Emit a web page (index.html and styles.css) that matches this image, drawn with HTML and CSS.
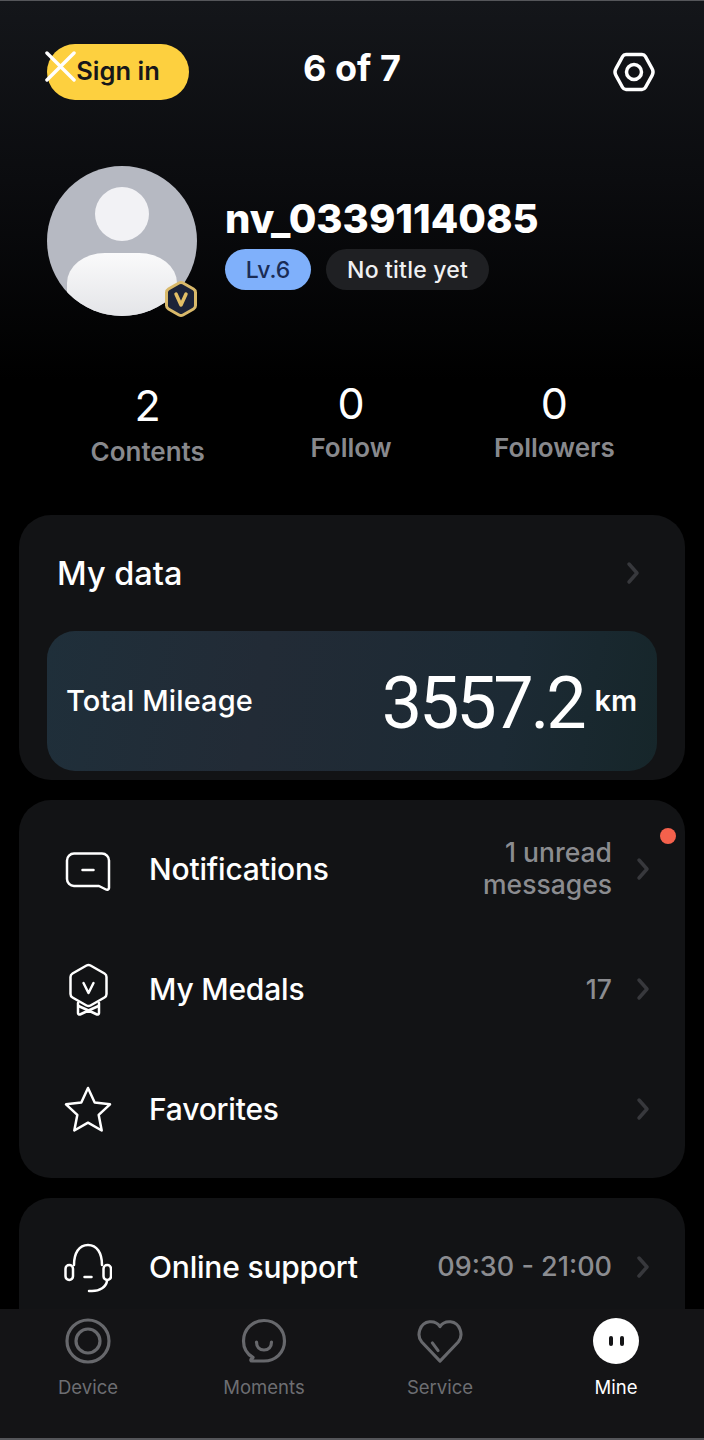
FILE: index.html
```html
<!DOCTYPE html>
<html>
  <head>
    <meta name="viewport" content="width=device-width, initial-scale=1" />
    <title>Mine</title>
    <link rel="stylesheet" href="styles.css">
  </head>
  <body>
    <div class="screen">
      <main class="content">
        <header class="topbar">
          <button class="signin" type="button">Sign in</button>
          <svg class="close-icon" viewBox="0 0 32 32"><path d="M2 2 30 30M30 2 2 30"/></svg>
          <h1 class="page-count">6 of 7</h1>
          <svg class="settings-icon" viewBox="0 0 42 42"><path d="M13 3.500h16a4 4 0 0 1 3.400 2L39 17.500a7 7 0 0 1 0 7l-6.600 12a4 4 0 0 1-3.400 2H13a4 4 0 0 1-3.400-2L3 24.500a7 7 0 0 1 0-7l6.600-12a4 4 0 0 1 3.400-2z"/><circle cx="21" cy="21" r="7.500"/></svg>
        </header>

        <section class="profile">
          <div class="avatar">
            <div class="avatar-clip">
              <div class="avatar-head"></div>
              <div class="avatar-body"></div>
            </div>
            <svg class="avatar-badge" viewBox="0 0 34 38"><path class="badge-hex" d="M15 3a4 4 0 0 1 4 0l10.500 6a4 4 0 0 1 2 3.500v13a4 4 0 0 1-2 3.500L19 35a4 4 0 0 1-4 0L4.500 29a4 4 0 0 1-2-3.500v-13a4 4 0 0 1 2-3.500z"/><path class="badge-v" d="M12 14l5 11 5-11"/></svg>
          </div>
          <div class="profile-info">
            <div class="username">nv_0339114085</div>
            <div class="chips">
              <span class="chip chip-level">Lv.6</span>
              <span class="chip chip-title">No title yet</span>
            </div>
          </div>
        </section>

        <section class="stats">
          <div class="stat stat-first"><b>2</b><span>Contents</span></div>
          <div class="stat"><b>0</b><span>Follow</span></div>
          <div class="stat"><b>0</b><span>Followers</span></div>
        </section>

        <section class="card card-data">
          <div class="data-head">
            <span>My data</span>
            <svg class="chevron" viewBox="0 0 14 24"><path d="M3 3l8 9-8 9"/></svg>
          </div>
          <div class="mileage">
            <span class="mileage-label">Total Mileage</span>
            <span class="mileage-value">3557.2</span>
            <span class="mileage-unit">km</span>
          </div>
        </section>

        <section class="card card-list">
          <span class="unread-dot"></span>
          <div class="row">
            <svg class="row-icon" viewBox="0 0 48 56"><path d="M10 12.500h28a7 7 0 0 1 7 7V47a2 2 0 0 1-3 1.500L35 45H10a7 7 0 0 1-7-7V19.500a7 7 0 0 1 7-7z"/><path d="M18.500 29h11"/></svg>
            <span class="row-label">Notifications</span>
            <span class="row-value row-value-wrap">1 unread<br>messages</span>
            <svg class="chevron" viewBox="0 0 14 24"><path d="M3 3l8 9-8 9"/></svg>
          </div>
          <div class="row">
            <svg class="row-icon" viewBox="0 0 48 56"><path d="M22.500 4.500a4 4 0 0 1 4 0l14 8a4 4 0 0 1 2 3.500v17a4 4 0 0 1-2 3.500l-14 8a4 4 0 0 1-4 0l-14-8a4 4 0 0 1-2-3.500v-17a4 4 0 0 1 2-3.500z"/><path d="M19.500 22l5 10 5-10"/><path d="M14 42v10a1.500 1.500 0 0 0 2 1.500l8.500-4 8.500 4a1.500 1.500 0 0 0 2-1.500V42"/><path d="M14.500 45l10 4.500 10-4.500"/></svg>
            <span class="row-label">My Medals</span>
            <span class="row-value">17</span>
            <svg class="chevron" viewBox="0 0 14 24"><path d="M3 3l8 9-8 9"/></svg>
          </div>
          <div class="row">
            <svg class="row-icon" viewBox="0 -5 48 56"><path d="M24 2l6.700 14.500 15.300 1.800-11.300 10.600 3 15.600L24 36.700 10.300 44.500l3-15.600L2 18.300l15.300-1.800z"/></svg>
            <span class="row-label">Favorites</span>
            <svg class="chevron" viewBox="0 0 14 24"><path d="M3 3l8 9-8 9"/></svg>
          </div>
        </section>

        <section class="card card-support">
          <div class="row">
            <svg class="row-icon" viewBox="0 -2 48 56"><path d="M10 24C10 12 15 4 24 4s14 8 14 20"/><rect x="1.500" y="24" width="7.500" height="15" rx="3.700"/><rect x="39.500" y="24" width="7.500" height="15" rx="3.700"/><path d="M20.500 36h7"/><path d="M43 40c-1 6-7 10-15 10h-3"/></svg>
            <span class="row-label">Online support</span>
            <span class="row-value row-value-wide">09:30 - 21:00</span>
            <svg class="chevron" viewBox="0 0 14 24"><path d="M3 3l8 9-8 9"/></svg>
          </div>
        </section>
      </main>

      <nav class="tabbar">
        <div class="tab">
          <svg class="tab-icon" viewBox="0 0 46 46"><circle cx="23" cy="23" r="21"/><circle cx="23" cy="23" r="12"/></svg>
          <span>Device</span>
        </div>
        <div class="tab">
          <svg class="tab-icon" viewBox="0 0 46 46"><path d="M12 39.500C6 36 2.500 30 2.500 23 2.500 11.500 11.500 2.500 23 2.500S43.500 11.500 43.500 23 34.500 43 23 43H11c-1.500 0-1.500-1.500-.5-2z"/><path d="M15.500 24c0 5 3 8 7.500 8s7.500-3 7.500-8"/></svg>
          <span>Moments</span>
        </div>
        <div class="tab">
          <svg class="tab-icon" viewBox="0 0 48 46"><path d="M24 44 5 24C-1 17 3 4 13 3c5-.5 9 2 11 5 2-3 6-5.500 11-5 10 1 14 14 8 21z"/><path d="M16 25l6 8"/></svg>
          <span>Service</span>
        </div>
        <div class="tab tab-active">
          <div class="mine-icon"><i></i><i></i></div>
          <span>Mine</span>
        </div>
      </nav>
    </div>
  </body>
</html>
```

FILE: styles.css
```css
* {
  box-sizing: border-box;
}

html,
body {
  margin: 0;
  background: #000;
}

body {
  font-family: Inter, "Liberation Sans", sans-serif;
  color: #fff;
}

svg {
  fill: none;
  stroke-linecap: round;
  stroke-linejoin: round;
}

.screen {
  width: 704px;
  height: 1440px;
  display: flex;
  flex-direction: column;
  overflow: hidden;
  background: linear-gradient(#14161a 0, #0b0c0f 180px, #000 380px);
  border-top: 1px solid #55565a;
  border-bottom: 2px solid #55565a;
}

.content {
  flex: 1;
  min-height: 0;
  overflow: hidden;
}

/* top bar */
.topbar {
  position: relative;
  height: 56px;
  margin-top: 43px;
  padding: 0 49px 0 47px;
  display: flex;
  align-items: center;
  justify-content: space-between;
}

.signin {
  width: 142px;
  height: 56px;
  padding: 0 0 3px;
  border: none;
  border-radius: 28px;
  background: #fdd03f;
  color: #17171a;
  font-family: inherit;
  font-size: 25.500px;
  font-weight: 600;
}

.close-icon {
  position: absolute;
  left: 45px;
  top: 7px;
  width: 31px;
  height: 31px;
  stroke: #fff;
  stroke-width: 3.500;
}

.page-count {
  position: absolute;
  left: 0;
  right: 0;
  top: 4px;
  margin: 0;
  text-align: center;
  font-size: 36px;
  line-height: 40px;
  font-weight: 700;
}

.settings-icon {
  width: 42px;
  height: 42px;
  stroke: #fff;
  stroke-width: 3.500;
}

/* profile */
.profile {
  margin-top: 66px;
  padding-left: 47px;
  display: flex;
  align-items: center;
  gap: 29px;
}

.avatar {
  position: relative;
  flex: none;
  width: 150px;
  height: 150px;
}

.avatar-clip {
  position: relative;
  width: 150px;
  height: 150px;
  border-radius: 50%;
  overflow: hidden;
  background: #b6b9c2;
}

.avatar-head {
  position: absolute;
  left: 48px;
  top: 21px;
  width: 54px;
  height: 54px;
  border-radius: 50%;
  background: #f2f2f5;
}

.avatar-body {
  position: absolute;
  left: 20px;
  top: 87px;
  width: 110px;
  height: 63px;
  border-radius: 38px 38px 0 0 / 30px 30px 0 0;
  background: linear-gradient(#fafafb, #e4e5e8);
}

.avatar-badge {
  position: absolute;
  right: -1px;
  bottom: -2px;
  width: 34px;
  height: 38px;
}

.badge-hex {
  fill: #1c2338;
  stroke: #d9b96a;
  stroke-width: 3;
}

.badge-v {
  stroke: #e3bf66;
  stroke-width: 3.500;
}

.profile-info {
  margin-top: 5px;
}

.username {
  font-size: 40px;
  line-height: 44px;
  font-weight: 800;
  margin-left: -1px;
}

.chips {
  margin-top: 8px;
  margin-left: -1px;
  display: flex;
  gap: 15px;
}

.chip {
  height: 41px;
  border-radius: 21px;
  display: flex;
  align-items: center;
  justify-content: center;
  font-size: 23px;
  font-weight: 500;
}

.chip-level {
  width: 86px;
  background: #7fb0fb;
  color: #1a2c55;
}

.chip-title {
  width: 163px;
  background: #1f2023;
  color: #f0f0f2;
  letter-spacing: 0.200px;
}

/* stats */
.stats {
  margin-top: 61px;
  height: 138px;
  padding: 0 48px 0 46px;
  display: grid;
  grid-template-columns: repeat(3, 1fr);
}

.stat {
  display: flex;
  flex-direction: column;
  align-items: center;
  gap: 3px;
}

.stat b {
  font-size: 43px;
  line-height: 52px;
  font-weight: 400;
}

.stat span {
  font-size: 26px;
  line-height: 32px;
  font-weight: 600;
  color: #88898d;
}

.stat-first {
  padding-top: 2px;
  gap: 5px;
}

/* cards */
.card {
  position: relative;
  margin: 0 19px 20px;
  border-radius: 32px;
  background: #121315;
}

.card-data {
  height: 265px;
  padding: 0 28px;
  margin-bottom: 20px;
}

.data-head {
  height: 116px;
  padding: 0 17px 0 10px;
  display: flex;
  align-items: center;
  justify-content: space-between;
  font-size: 32.500px;
  font-weight: 500;
}

.mileage {
  height: 140px;
  padding: 0 20px 0 19px;
  display: flex;
  align-items: center;
  border-radius: 28px;
  background: linear-gradient(100deg, #1f2f3a 0, #222b36 35%, #1c2a34 75%, #16262a 100%);
}

.mileage-label {
  flex: 1;
  font-size: 29px;
  font-weight: 500;
  letter-spacing: 0.100px;
  margin-bottom: 2px;
}

.mileage-value {
  margin: 6px 11px 0 0;
  font-family: Roboto, sans-serif;
  font-size: 72px;
  font-weight: 400;
  line-height: 1;
  letter-spacing: -3.300px;
}

.mileage-unit {
  margin-bottom: 2px;
  font-size: 29px;
  font-weight: 600;
}

.chevron {
  flex: none;
  width: 14px;
  height: 24px;
  stroke: #37383c;
  stroke-width: 3.500;
}

.card-list {
  height: 378px;
  padding-top: 9px;
}

.unread-dot {
  position: absolute;
  right: 9px;
  top: 28px;
  width: 16px;
  height: 16px;
  border-radius: 50%;
  background: #f4614c;
}

.row {
  height: 120px;
  padding: 0 35px 0 45px;
  display: flex;
  align-items: center;
}

.row-icon {
  flex: none;
  width: 48px;
  height: 56px;
  margin-right: 37px;
  stroke: #fff;
  stroke-width: 2.500;
}

.row-label {
  flex: 1;
  font-size: 30px;
  font-weight: 500;
  letter-spacing: -0.200px;
}

.row-value {
  margin-right: 24px;
  text-align: right;
  font-size: 26.500px;
  line-height: 32px;
  font-weight: 500;
  color: #8b8c90;
}

.row-value-wrap {
  margin-bottom: 2px;
}

.row-value-wide {
  font-size: 27px;
}

.card-support {
  height: 160px;
  padding-top: 9px;
  margin-bottom: 0;
}

/* tab bar */
.tabbar {
  flex: none;
  height: 129px;
  padding-top: 9px;
  display: grid;
  grid-template-columns: repeat(4, 176px);
  background: #141416;
}

.tab {
  display: flex;
  flex-direction: column;
  align-items: center;
  font-size: 18.500px;
  line-height: 24px;
  color: #6d6e72;
}

.tab-icon {
  width: 46px;
  height: 46px;
  stroke: #67686c;
  stroke-width: 3.200;
}

.tab span {
  margin-top: 11px;
}

.tab-active {
  color: #fff;
}

.mine-icon {
  width: 46px;
  height: 46px;
  border-radius: 50%;
  background: #fff;
  display: flex;
  align-items: center;
  justify-content: center;
  gap: 7px;
}

.mine-icon i {
  width: 4px;
  height: 10px;
  border-radius: 2px;
  background: #141416;
}
```
